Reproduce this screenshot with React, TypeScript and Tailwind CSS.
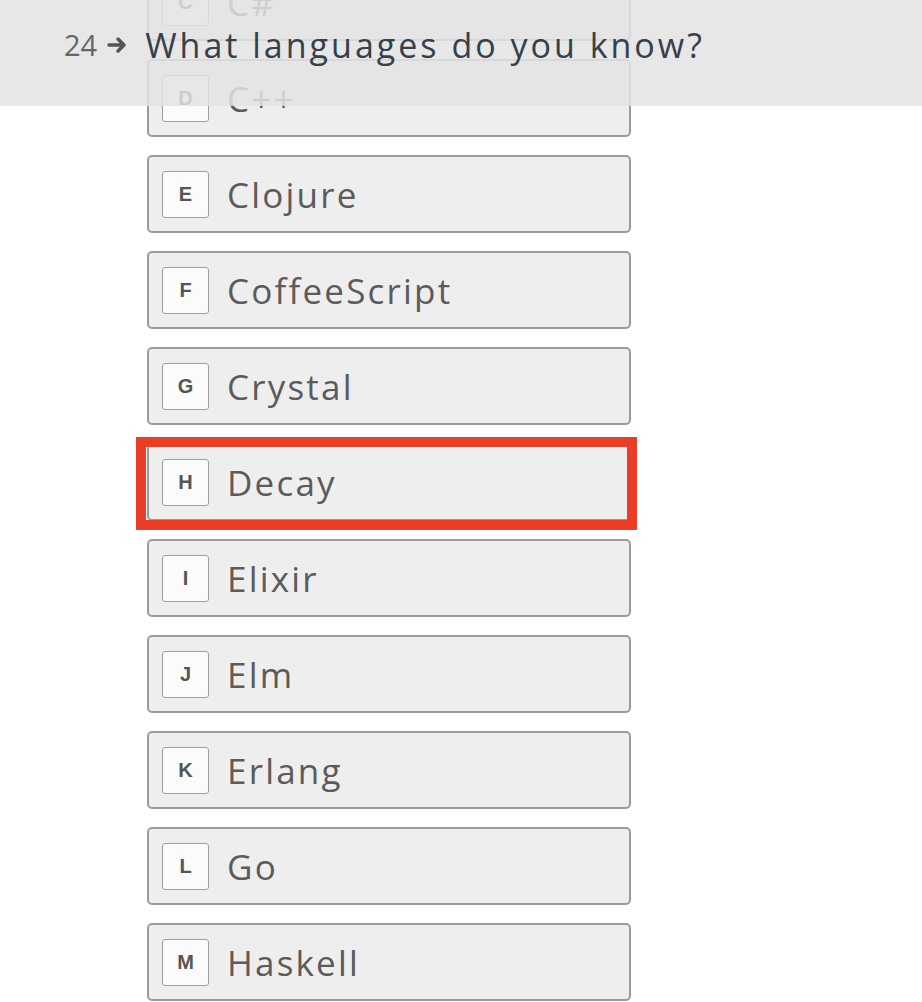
import React from "react";

const options = [
  ["C", "C#"],
  ["D", "C++"],
  ["E", "Clojure"],
  ["F", "CoffeeScript"],
  ["G", "Crystal"],
  ["H", "Decay"],
  ["I", "Elixir"],
  ["J", "Elm"],
  ["K", "Erlang"],
  ["L", "Go"],
  ["M", "Haskell"],
];

export default function App() {
  return (
    <div
      className="relative w-[922px] h-[1002px] overflow-hidden bg-white"
      style={{ fontFamily: "'Open Sans', Lato, sans-serif" }}
    >
      <div className="flex flex-col gap-[18px] pl-[147px] mt-[-37px]">
        {options.map(([k, label]) => (
          <div
            key={k}
            className="relative flex items-center w-[484px] h-[78px] shrink-0 rounded-[5px] border-2 border-[#9b9b9b] bg-[#eeeeee] pl-[13px]"
          >
            <div
              className="flex items-center justify-center w-[47px] h-[47px] rounded-[3px] border border-[#9e9e9e] bg-[#fbfbfb] text-[20px] font-bold text-[#555555]"
              style={{ fontFamily: "'Liberation Sans', Arial, sans-serif" }}
            >
              {k}
            </div>
            <span className="ml-[18px] text-[35px] tracking-[2.2px] text-[#5b5b5b] leading-none">
              {label}
            </span>
            {k === "H" && (
              <div className="absolute left-[-13px] top-[-8px] w-[501px] h-[93px] border-[10px] border-[#ec3e26]" />
            )}
          </div>
        ))}
      </div>
      <div className="absolute left-0 top-0 w-full h-[106px] bg-[#e3e3e3]/85 flex items-center">
        <div className="flex items-center pl-[64px] mt-[-17px]">
          <span className="text-[29px] text-[#666666] leading-none">24</span>
          <svg width="22" height="18" viewBox="0 0 22 18" className="ml-[10px]">
            <path d="M2 9 H17 M11 3 L17 9 L11 15" stroke="#555" strokeWidth="3.5" fill="none" strokeLinecap="round" strokeLinejoin="round" />
          </svg>
          <span className="ml-[16px] text-[34px] text-[#36404a] leading-none tracking-[3px]">
            What languages do you know?
          </span>
        </div>
      </div>
    </div>
  );
}
